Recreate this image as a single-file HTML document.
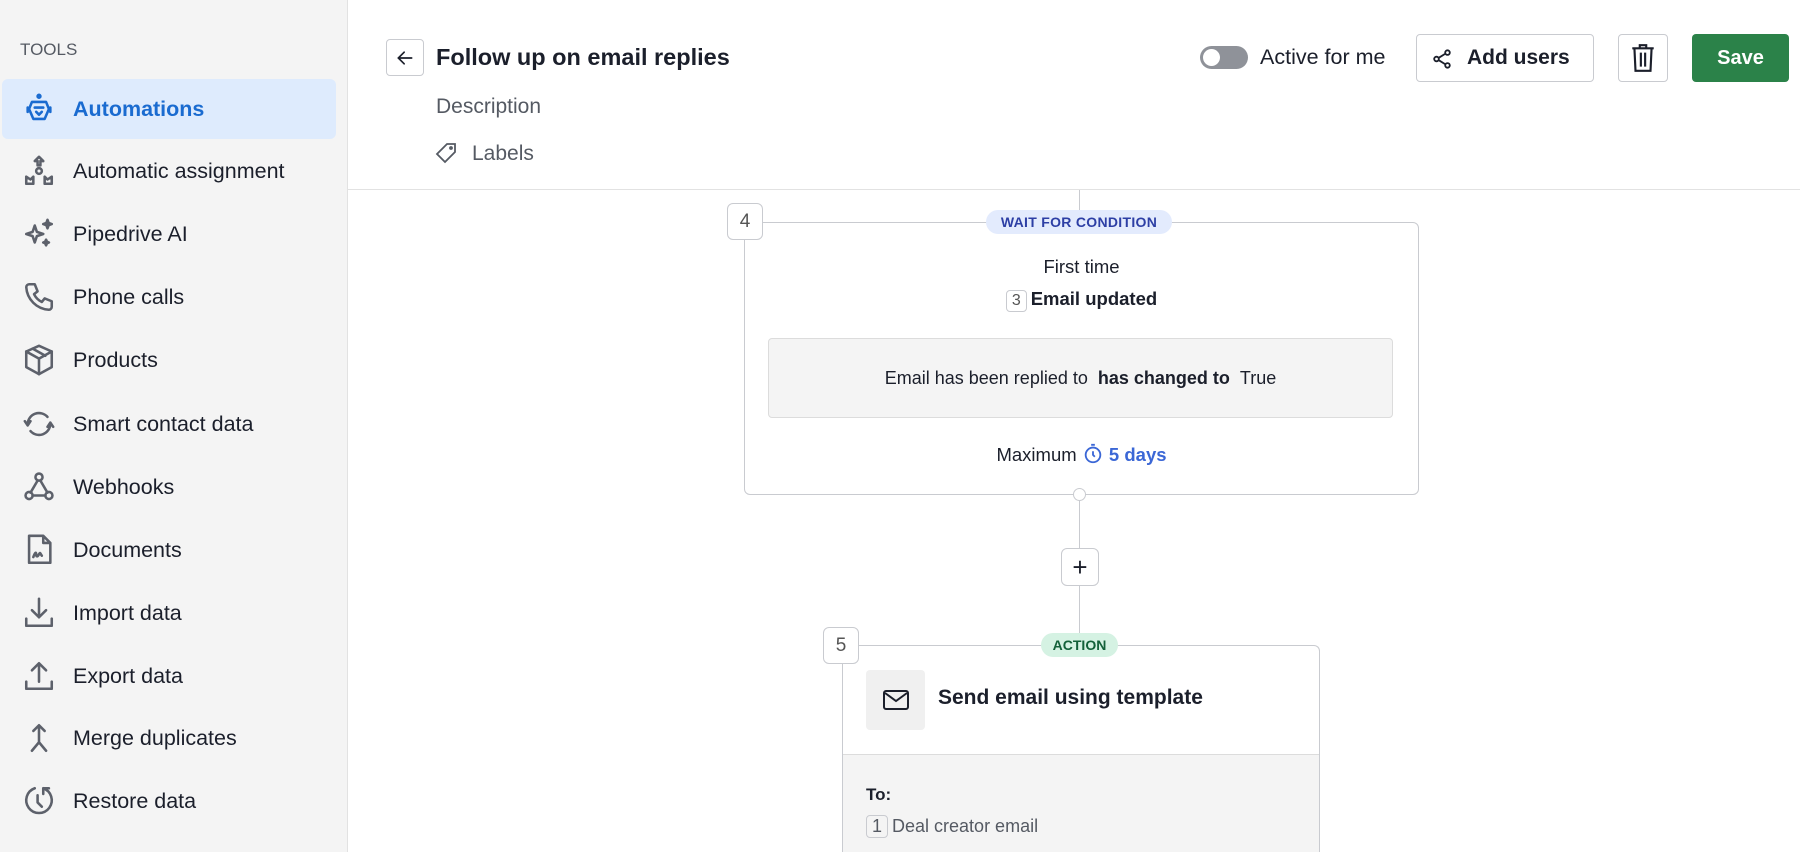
<!DOCTYPE html>
<html style="width:1800px;height:852px;overflow:hidden"><head><meta charset="utf-8">
<style>
*{box-sizing:border-box;margin:0;padding:0}
body{width:1800px;height:852px;overflow:hidden;font-family:"Liberation Sans",sans-serif;background:#fff;color:#1b1f2b;position:relative}
.sb{position:absolute;left:0;top:0;width:348px;height:852px;background:#f4f4f4;border-right:1px solid #e2e2e2}
.tools{position:absolute;left:20px;top:40px;font-size:17px;color:#555a63}
.item{position:absolute;left:2px;width:334px;height:60px;display:flex;align-items:center;font-size:21.5px;color:#1b1f2b}
.item svg{position:absolute;left:20px;width:34px;height:34px;fill:none;stroke:#5d616b;stroke-width:1.8;stroke-linecap:round;stroke-linejoin:round}
.item span{position:absolute;left:71px}
.item.act{background:#deebfd;border-radius:6px;color:#1a6bd0;font-weight:bold}
.item.act svg{stroke:#1a6bd0}
.abs{position:absolute}
.btn{position:absolute;border:1px solid #c9cbd0;border-radius:4px;background:#fff}
.num{position:absolute;width:36px;height:37px;border:1px solid #c9cbd0;border-radius:6px;background:#fff;font-size:19px;color:#555;display:flex;align-items:center;justify-content:center}
.vl{position:absolute;width:1px;background:#c9cbd0;left:1079px}
</style></head><body>
<div class="sb">
<div class="tools">TOOLS</div>
<div class="item act" style="top:79px"><svg viewBox="0 0 24 24"><circle cx="12" cy="3" r="1"/><path d="M7 7h10l2 5-3 7h-8l-3-7z"/><path d="M9 11h6M10 14l2 2 2-2M4 11v3M20 11v3"/></svg><span>Automations</span></div>
<div class="item" style="top:141px"><svg viewBox="0 0 24 24"><path d="M12 2l-3 3h2v3h2V5h2z"/><circle cx="12" cy="12" r="2"/><path d="M3 21v-5l3 2 2-2v5zM21 21v-5l-3 2-2-2v5z"/></svg><span>Automatic assignment</span></div>
<div class="item" style="top:204px"><svg viewBox="0 0 24 24"><path d="M9 6l1.5 4.5L15 12l-4.5 1.5L9 18l-1.5-4.5L3 12l4.5-1.5z"/><path d="M18 2l.8 2.2L21 5l-2.2.8L18 8l-.8-2.2L15 5l2.2-.8zM17 16l.6 1.4L19 18l-1.4.6L17 20l-.6-1.4L15 18l1.4-.6z" fill="#5d616b"/></svg><span>Pipedrive AI</span></div>
<div class="item" style="top:267px"><svg viewBox="0 0 24 24"><path d="M5 3l4 0 2 5-2.5 2a12 12 0 0 0 5.5 5.5l2-2.5 5 2v4c0 1-1 2-2 2A17 17 0 0 1 3 5c0-1 1-2 2-2z"/></svg><span>Phone calls</span></div>
<div class="item" style="top:330px"><svg viewBox="0 0 24 24"><path d="M12 2l9 4v11l-9 5-9-5V6z"/><path d="M3 6l9 5 9-5M12 11v11M7.5 4l9 5"/></svg><span>Products</span></div>
<div class="item" style="top:394px"><svg viewBox="0 0 24 24"><path d="M4 12a8 8 0 0 1 14-5M20 12a8 8 0 0 1-14 5M2 10l2 3 2-3M18 14l2-3 2 3"/></svg><span>Smart contact data</span></div>
<div class="item" style="top:457px"><svg viewBox="0 0 24 24"><circle cx="12" cy="5" r="2.5"/><circle cx="5" cy="18" r="2.5"/><circle cx="19" cy="18" r="2.5"/><path d="M11 7.5L6 16M13 7.5l5 8.5M7.5 18h9"/></svg><span>Webhooks</span></div>
<div class="item" style="top:520px"><svg viewBox="0 0 24 24"><path d="M5 2h10l5 5v14H5z M15 2v5h5"/><path d="M8 17c1-3 2-4 2-2s1 2 2 0 1 0 2 1"/></svg><span>Documents</span></div>
<div class="item" style="top:583px"><svg viewBox="0 0 24 24"><path d="M12 2v13M7 10l5 5 5-5M3 16v5h18v-5"/></svg><span>Import data</span></div>
<div class="item" style="top:646px"><svg viewBox="0 0 24 24"><path d="M12 16V3M7 8l5-5 5 5M3 16v5h18v-5"/></svg><span>Export data</span></div>
<div class="item" style="top:708px"><svg viewBox="0 0 24 24"><path d="M8 7l4-4 4 4M12 3v12l-5 6M12 15l5 6"/></svg><span>Merge duplicates</span></div>
<div class="item" style="top:771px"><svg viewBox="0 0 24 24"><path d="M15 3a9 9 0 1 1-6 0M15 3h4M15 3v4M11 8v5l3 3"/></svg><span>Restore data</span></div>
</div>

<div class="btn" style="left:386px;top:39px;width:38px;height:37px;display:flex;align-items:center;justify-content:center"><svg width="20" height="20" viewBox="0 0 24 24" fill="none" stroke="#1b1f2b" stroke-width="2" stroke-linecap="round"><path d="M20 12H5M11 5l-7 7 7 7"/></svg></div>
<div class="abs" style="left:436px;top:44px;font-size:23.5px;font-weight:bold">Follow up on email replies</div>
<div class="abs" style="left:436px;top:95px;font-size:21px;color:#555a63">Description</div>
<svg class="abs" style="left:434px;top:141px" width="24" height="24" viewBox="0 0 24 24" fill="none" stroke="#555a63" stroke-width="1.8"><path d="M13 3h8v8L11 21l-8-8z"/><circle cx="17" cy="7" r="1"/></svg>
<div class="abs" style="left:472px;top:142px;font-size:21px;color:#555a63">Labels</div>
<div class="abs" style="left:348px;top:189px;width:1452px;height:1px;background:#e2e2e2"></div>

<div class="abs" style="left:1200px;top:46px;width:48px;height:23px;border-radius:12px;background:#8f9299"><div style="position:absolute;left:3px;top:3px;width:17px;height:17px;border-radius:50%;background:#fff"></div></div>
<div class="abs" style="left:1260px;top:45px;font-size:21.5px">Active for me</div>
<div class="btn" style="left:1416px;top:34px;width:178px;height:48px"><svg style="position:absolute;left:14px;top:13px" width="22" height="22" viewBox="0 0 24 24" fill="none" stroke="#1b1f2b" stroke-width="2"><circle cx="18" cy="5" r="2.5"/><circle cx="6" cy="12" r="2.5"/><circle cx="18" cy="19" r="2.5"/><path d="M8 11l8-5M8 13l8 5"/></svg><span style="position:absolute;left:50px;top:11px;font-size:21px;font-weight:bold">Add users</span></div>
<div class="btn" style="left:1618px;top:34px;width:50px;height:48px"><svg style="position:absolute;left:11px;top:8px" width="26" height="30" viewBox="0 0 24 28" fill="none" stroke="#1b1f2b" stroke-width="2"><path d="M2 5h20M9 5V2h6v3M4 5l1 21h14l1-21M10 9v13M14 9v13"/></svg></div>
<div class="abs" style="left:1692px;top:34px;width:97px;height:48px;background:#2b8249;border-radius:4px;color:#fff;font-size:20px;font-weight:bold;display:flex;align-items:center;justify-content:center">Save</div>

<div class="vl" style="top:190px;height:32px"></div>
<div class="abs" style="left:744px;top:222px;width:675px;height:273px;border:1px solid #c9cbd0;border-radius:6px;background:#fff"></div>
<div class="num" style="left:727px;top:203px">4</div>
<div class="abs" style="left:986px;top:210px;width:186px;height:24px;background:#e3ebfd;border-radius:12px;color:#2d3fa5;font-size:14px;font-weight:bold;display:flex;align-items:center;justify-content:center;letter-spacing:.3px">WAIT FOR CONDITION</div>
<div class="abs" style="left:744px;top:256px;width:675px;text-align:center;font-size:18.5px">First time</div>
<div class="abs" style="left:744px;top:288px;width:675px;text-align:center;font-size:18.5px;font-weight:bold"><span style="display:inline-block;border:1px solid #c9cbd0;border-radius:4px;font-weight:normal;color:#555;font-size:16px;padding:1px 5px;margin-right:4px">3</span>Email updated</div>
<div class="abs" style="left:768px;top:338px;width:625px;height:80px;background:#f4f4f4;border:1px solid #dcdcdc;border-radius:4px;display:flex;align-items:center;justify-content:center;font-size:18px">Email has been replied to&nbsp;&nbsp;<b>has changed to</b>&nbsp;&nbsp;True</div>
<div class="abs" style="left:744px;top:443px;width:675px;text-align:center;font-size:18.5px">Maximum <svg style="vertical-align:-4px" width="22" height="22" viewBox="0 0 24 24" fill="none" stroke="#3b67d6" stroke-width="2"><circle cx="12" cy="13" r="8"/><path d="M10 2h4M12 9v4l2 2"/></svg> <b style="color:#3b67d6">5 days</b></div>
<div class="abs" style="left:1073px;top:488px;width:13px;height:13px;border:1px solid #c9cbd0;border-radius:50%;background:#fff"></div>
<div class="vl" style="top:501px;height:47px"></div>
<div class="abs" style="left:1061px;top:548px;width:38px;height:38px;border:1px solid #c9cbd0;border-radius:6px;background:#fff;display:flex;align-items:center;justify-content:center;font-size:26px">+</div>
<div class="vl" style="top:586px;height:59px"></div>
<div class="abs" style="left:842px;top:645px;width:478px;height:207px;border:1px solid #c9cbd0;border-bottom:none;border-radius:6px 6px 0 0;background:#fff;overflow:hidden">
<div style="position:absolute;left:0;top:108px;width:100%;height:200px;background:#f4f4f4;border-top:1px solid #dcdcdc"></div>
</div>
<div class="num" style="left:823px;top:627px">5</div>
<div class="abs" style="left:1041px;top:633px;width:77px;height:24px;background:#d5f2e3;border-radius:12px;color:#13613a;font-size:14px;font-weight:bold;display:flex;align-items:center;justify-content:center">ACTION</div>
<div class="abs" style="left:866px;top:670px;width:59px;height:60px;background:#f0f0f0;border-radius:4px;display:flex;align-items:center;justify-content:center"><svg width="28" height="22" viewBox="0 0 28 22" fill="none" stroke="#1b1f2b" stroke-width="2"><rect x="2" y="2" width="24" height="18" rx="2"/><path d="M3 4l11 8 11-8"/></svg></div>
<div class="abs" style="left:938px;top:686px;font-size:21px;font-weight:bold">Send email using template</div>
<div class="abs" style="left:866px;top:785px;font-size:17px;font-weight:bold">To:</div>
<div class="abs" style="left:866px;top:815px;font-size:18px;color:#555a63"><span style="display:inline-block;border:1px solid #c9cbd0;border-radius:4px;padding:0 5px;margin-right:4px">1</span>Deal creator email</div>
</body></html>
